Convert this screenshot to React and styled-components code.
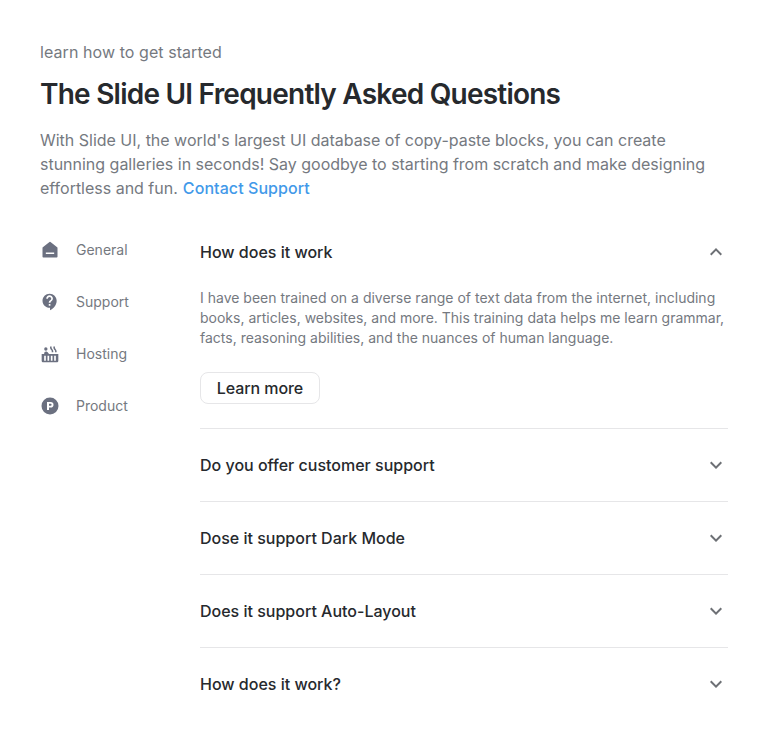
import React from 'react';
import styled, { createGlobalStyle } from 'styled-components';
import { MdContactSupport, MdHotTub } from 'react-icons/md';

const Global = createGlobalStyle`
  * { box-sizing: border-box; }
  body { margin: 0; background: #fff; font-family: Inter, sans-serif; }
  h1, h2, p { margin: 0; }
  button { font-family: inherit; }
`;
const Page = styled.main`
  width: 768px; height: 736px; padding: 40px; background: #fff; color: #26292d;
`;
const Eyebrow = styled.p`
  font-size: 16px; line-height: 24px; letter-spacing: 0.07px; color: #75797f;
`;
const Title = styled.h1`
  margin-top: 12px; font-size: 28px; line-height: 36px; font-weight: 600; letter-spacing: -0.77px; color: #26292d;
`;
const Intro = styled.p`
  margin-top: 16px; font-size: 16px; line-height: 24px; letter-spacing: -0.01px; color: #75797f; white-space: nowrap;
`;
const Link = styled.a`
  margin-left: 0.6px; color: #4299e9; font-weight: 500; letter-spacing: 0.07px;
`;
const Body = styled.div`
  display: grid; grid-template-columns: 160px 528px; margin-top: 28px;
`;
const Nav = styled.nav`
  display: flex; flex-direction: column; gap: 28px; padding-top: 10px;
`;
const NavItem = styled.div`
  display: flex; align-items: center; gap: 16px; height: 24px; font-size: 14px; line-height: 20px; color: #75797f;
  svg { color: #6b7080; }
`;
const Item = styled.section`
  border-bottom: 1px solid #e6e6e8;
  &:last-child { border-bottom: 0; }
`;
const Question = styled.h2`
  display: flex; align-items: center; justify-content: space-between;
  height: ${p => (p.$open ? 48 : 72)}px; font-size: 16px; line-height: 24px; font-weight: 500; color: #26292d;
`;
const Answer = styled.p`
  margin-top: 12px; font-size: 14px; line-height: 20px; color: #75797f; white-space: nowrap;
`;
const More = styled.button`
  display: block; width: 120px; height: 32px; margin: 24px 0; padding: 0;
  border: 1px solid #e6e6e8; border-radius: 8px; background: #fff; color: #26292d;
  font-size: 16px; line-height: 24px; font-weight: 500; letter-spacing: -0.08px;
`;
const Chevron = ({ up }) => (
  <svg width="24" height="24" viewBox="0 0 24 24" fill="#6d7075">
    <path d={up ? 'M12 8l-6 6 1.41 1.41L12 10.83l4.59 4.58L18 14z' : 'M16.59 8.59L12 13.17 7.41 8.59 6 10l6 6 6-6z'} />
  </svg>
);
const HomeIcon = ({ size }) => (
  <svg width={size} height={size} viewBox="0 0 20 20" fill="currentColor">
    <path fillRule="evenodd" d="M9.5 1.95a.85.85 0 0 1 1 0l6.67 5.2a.85.85 0 0 1 .33.66v8.86a.83.83 0 0 1-.83.83H3.33a.83.83 0 0 1-.83-.83V7.81c0-.26.12-.5.32-.66zM5.83 12.5v1.5h8.34v-1.5z" />
  </svg>
);
const ProductIcon = ({ size }) => (
  <svg width={size} height={size} viewBox="0 0 20 20" fill="currentColor">
    <path fillRule="evenodd" d="M10 1.5a8.5 8.5 0 1 1 0 17a8.5 8.5 0 0 1 0-17zM7 6v8h2v-2.4h1.7a2.8 2.8 0 0 0 0-5.6zM9 7.8h1.6a1 1 0 0 1 0 2H9z" />
  </svg>
);

const sections = [
  { name: 'General', Icon: HomeIcon },
  { name: 'Support', Icon: MdContactSupport },
  { name: 'Hosting', Icon: MdHotTub },
  { name: 'Product', Icon: ProductIcon },
];

export default function App() {
  return (
    <Page>
      <Global />
      <Eyebrow>learn how to get started</Eyebrow>
      <Title>The Slide UI Frequently Asked Questions</Title>
      <Intro>
        With Slide UI, the world's largest UI database of copy-paste blocks, you can create<br />
        stunning galleries in seconds! Say goodbye to starting from scratch and make designing<br />
        effortless and fun. <Link>Contact Support</Link>
      </Intro>
      <Body>
        <Nav>
          {sections.map(({ name, Icon }) => <NavItem key={name}><Icon size={20} /><span>{name}</span></NavItem>)}
        </Nav>
        <div>
          <Item>
            <Question $open>How does it work<Chevron up /></Question>
            <Answer>
              I have been trained on a diverse range of text data from the internet, including<br />
              books, articles, websites, and more. This training data helps me learn grammar,<br />
              facts, reasoning abilities, and the nuances of human language.
            </Answer>
            <More>Learn more</More>
          </Item>
          {['Do you offer customer support', 'Dose it support Dark Mode', 'Does it support Auto-Layout', 'How does it work?'].map(q => (
            <Item key={q}><Question>{q}<Chevron /></Question></Item>
          ))}
        </div>
      </Body>
    </Page>
  );
}
